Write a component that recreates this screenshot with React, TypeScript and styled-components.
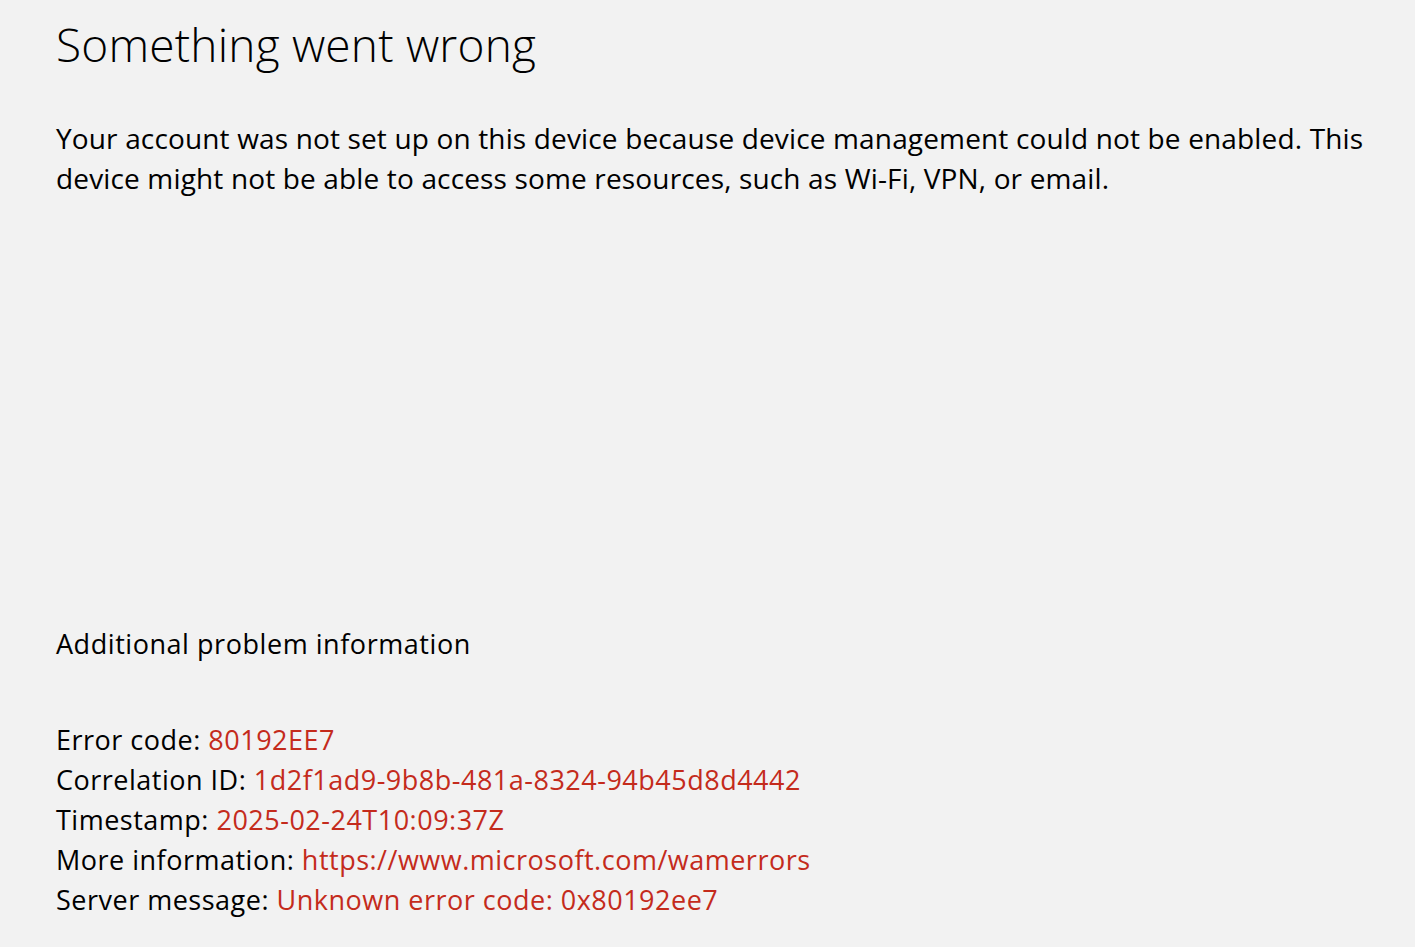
import React from 'react';
import styled, { createGlobalStyle } from 'styled-components';

const GlobalStyle = createGlobalStyle`
  html, body {
    margin: 0;
    padding: 0;
    background: #f2f2f2;
  }
  body {
    font-family: "Open Sans", "Noto Sans", "Liberation Sans", sans-serif;
    color: #000;
  }
`;

const Page = styled.div`
  width: 1415px;
  height: 947px;
  box-sizing: border-box;
  padding: 14px 0 0 56px;
  background: #f2f2f2;
  display: flex;
  flex-direction: column;
  overflow: hidden;
`;

const Title = styled.h1`
  margin: 0 0 44px;
  font-size: 46px;
  line-height: 60px;
  font-weight: 300;
  letter-spacing: 0.2px;
`;

const Description = styled.p`
  margin: 0;
  width: 1312px;
  font-size: 28px;
  line-height: 40px;
  letter-spacing: 0.15px;
`;

const SectionTitle = styled.h2`
  margin: 426px 0 0;
  font-size: 27px;
  line-height: 40px;
  font-weight: 400;
  letter-spacing: 0.55px;
`;

const InfoList = styled.div`
  margin-top: 56px;
  display: flex;
  flex-direction: column;
`;

const InfoRow = styled.div`
  font-size: 27px;
  line-height: 40px;
  letter-spacing: 0.5px;
`;

const Value = styled.span`
  color: #c42b1c;
`;

const info: [string, string][] = [
  ['Error code', '80192EE7'],
  ['Correlation ID', '1d2f1ad9-9b8b-481a-8324-94b45d8d4442'],
  ['Timestamp', '2025-02-24T10:09:37Z'],
  ['More information', 'https://www.microsoft.com/wamerrors'],
  ['Server message', 'Unknown error code: 0x80192ee7'],
];

const App: React.FC = () => {
  return (
    <>
      <GlobalStyle />
      <Page>
        <Title>Something went wrong</Title>
        <Description>
          Your account was not set up on this device because device management could not be enabled. This
          device might not be able to access some resources, such as Wi-Fi, VPN, or email.
        </Description>
        <SectionTitle>Additional problem information</SectionTitle>
        <InfoList>
          {info.map(([label, value]) => (
            <InfoRow key={label}>
              {label}: <Value>{value}</Value>
            </InfoRow>
          ))}
        </InfoList>
      </Page>
    </>
  );
};

export default App;
